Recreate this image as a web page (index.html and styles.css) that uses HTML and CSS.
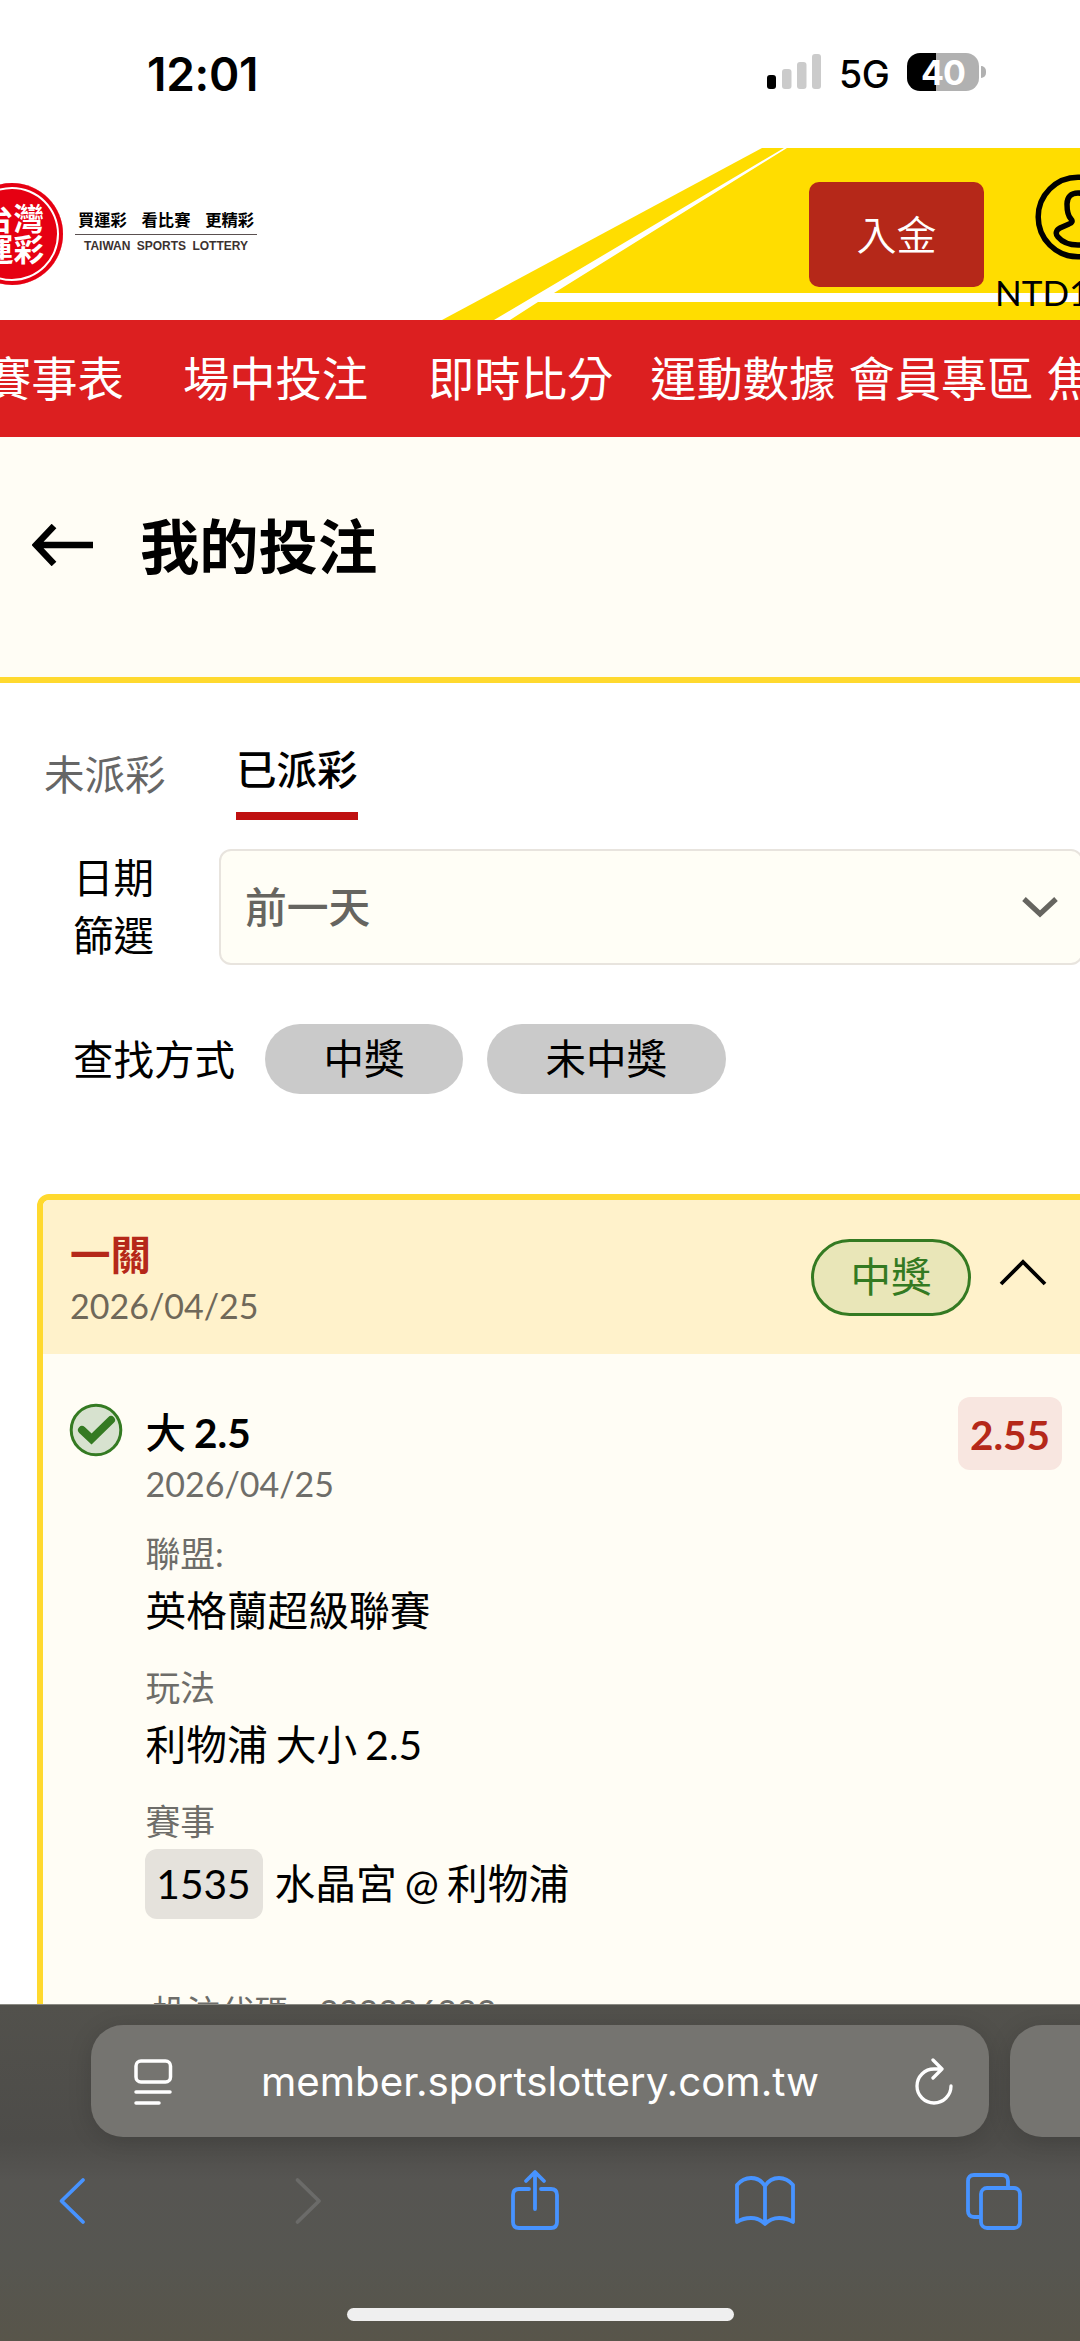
FILE: index.html
```html
<!DOCTYPE html>
<html lang="zh-Hant">
<head>
<meta charset="utf-8">
<title>我的投注</title>
<link rel="stylesheet" href="styles.css">
</head>
<body>
<div class="screen">
  <div class="status">
    <span class="time">12:01</span>
    <div class="status-right">
      <svg class="signal" viewBox="0 0 54 36"><rect x="0" y="21" width="9" height="14" rx="3"/><g fill="#cbcbcb"><rect x="15" y="15" width="9.500" height="20" rx="3"/><rect x="30" y="8" width="9.500" height="27" rx="3"/><rect x="45" y="0" width="9" height="35" rx="3"/></g></svg>
      <span class="net">5G</span>
      <span class="battery">40</span>
      <span class="nub"></span>
    </div>
  </div>

  <header class="site-header">
    <svg class="header-art" viewBox="0 0 1080 172" preserveAspectRatio="none"><path d="M762 0H1080V172H442Z" fill="#ffdd00"/><path d="M784 0h3L554 145H1080V154H538L510 172H494Z" fill="#fff"/></svg>
    <div class="logo"><div class="seal"><span>台灣</span><span>運彩</span></div>
      <div class="slogan"><div class="slogan-zh"><span>買運彩</span><span>看比賽</span><span>更精彩</span></div><div class="slogan-en">TAIWAN SPORTS LOTTERY</div></div>
    </div>
    <button class="deposit">入金</button>
    <div class="account">
      <svg class="user" viewBox="0 0 86 86" fill="none" stroke="#000" stroke-width="5.5"><circle cx="43" cy="43" r="39.800"/><path d="M43 19C36 19 32 23 32 30C32 38 33 42 36 45C38 47 37 49 34 50L25 54C21 56 20 60 23 63C28 69 36 71 43 71C50 71 58 69 63 63C66 60 65 56 61 54L52 50C49 49 48 47 50 45C53 42 54 38 54 30C54 23 50 19 43 19Z"/></svg>
      <span class="balance">NTD1</span>
    </div>
  </header>

  <nav class="nav"><a>賽事表</a><a>場中投注</a><a>即時比分</a><a>運動數據</a><a>會員專區</a><a>焦點</a></nav>

  <div class="title-band">
    <svg class="arrow" viewBox="0 0 62 42" fill="none" stroke="#000" stroke-width="6.500"><path d="M61 21H5M22 2L4 21L22 40"/></svg>
    <h1>我的投注</h1>
  </div>

  <main>
    <div class="tabs"><span class="tab">未派彩</span><span class="tab active">已派彩</span></div>
    <div class="filter-row">
      <div class="label">日期<br>篩選</div>
      <div class="select"><span>前一天</span><svg viewBox="0 0 36 22" width="36" height="22" fill="none" stroke="#666560" stroke-width="5.200"><path d="M2 3L18 18L34 3"/></svg></div>
    </div>
    <div class="search-row"><span>查找方式</span><span class="chip">中獎</span><span class="chip">未中獎</span></div>

    <section class="card">
      <div class="card-head">
        <div><div class="legs">一關</div><div class="date">2026/04/25</div></div>
        <div class="head-right"><span class="won">中獎</span><svg viewBox="0 0 48 28" width="48" height="28" fill="none" stroke="#000" stroke-width="3.800"><path d="M2 26L24 4L46 26"/></svg></div>
      </div>
      <div class="card-body">
        <svg class="check" viewBox="0 0 54 54"><circle cx="27" cy="27" r="24.800" fill="#d7e2cf" stroke="#347a22" stroke-width="3"/><path d="M13 27L22.500 36L42 17" fill="none" stroke="#347a22" stroke-width="8" stroke-linecap="round" stroke-linejoin="miter"/></svg>
        <div class="details">
          <div class="pick">大 <b>2.5</b></div>
          <div class="date pick-date">2026/04/25</div>
          <dl>
            <dt>聯盟:</dt><dd>英格蘭超級聯賽</dd>
            <dt>玩法</dt><dd>利物浦 大小 2.5</dd>
            <dt>賽事</dt><dd class="match"><span class="code">1535</span>水晶宮 @ 利物浦</dd>
          </dl>
          <div class="bet-code"><span>投注代碼:</span><span>222226222</span></div>
        </div>
        <div class="odds">2.55</div>
      </div>
    </section>
  </main>

  <footer class="browser">
    <div class="url-row">
      <div class="url">
        <svg viewBox="0 0 40 46" width="40" height="46" fill="none" stroke="#fff" stroke-width="3.500" stroke-linecap="round"><rect x="2" y="2" width="34.500" height="21" rx="5"/><path d="M2 33H36M2 44H25"/></svg>
        <span class="address">member.sportslottery.com.tw</span>
        <svg viewBox="0 0 40 48" width="40" height="48" fill="none" stroke="#fff" stroke-width="3.300" stroke-linecap="round" stroke-linejoin="round"><path d="M19 2L28 11L19 20M28 11H20A17 17 0 1 0 37 28"/></svg>
      </div>
      <div class="url next"></div>
    </div>
    <div class="tools">
      <svg viewBox="0 0 64 64"><path d="M42 11L20.500 32L42 53"/></svg>
      <svg class="off" viewBox="0 0 64 64"><path d="M25.500 11L47 32L25.500 53"/></svg>
      <svg viewBox="0 0 64 64"><path d="M27 20H17Q11 20 11 26V53Q11 59 17 59H49Q55 59 55 53V26Q55 20 49 20H39M33 40V4M24 12L33 3L42 12"/></svg>
      <svg viewBox="0 0 64 64"><path d="M32 17Q27 9 18 9Q10 9 4 16V53Q10 49 18 49Q26 49 32 55Q38 49 46 49Q54 49 60 53V16Q54 9 46 9Q37 9 32 17ZM32 17V54"/></svg>
      <svg viewBox="0 0 64 64"><path d="M16 48H11Q5 48 5 42V12Q5 6 11 6H39Q45 6 45 12V18"/><rect x="18" y="19" width="39" height="40" rx="6"/></svg>
    </div>
    <div class="home"></div>
  </footer>
</div>
</body>
</html>
```
FILE: styles.css
```css
* { box-sizing: border-box; }
body { margin: 0; background: #fff; color: #000; font-family: Lato, "Noto Sans CJK TC", sans-serif; }
.screen { width: 1080px; height: 2341px; overflow: hidden; display: flex; flex-direction: column; }
.screen > * { flex-shrink: 0; }

.status { height: 148px; padding: 53px 94px 0 147px; display: flex; justify-content: space-between; align-items: flex-start; font-family: Inter, sans-serif; }
.time { font-size: 46px; line-height: 42px; font-weight: 600; letter-spacing: -0.3px; }
.status-right { display: flex; align-items: center; height: 38px; }
.signal { width: 54px; height: 36px; margin-right: 18px; }
.net { font-size: 37.5px; font-weight: 500; line-height: 38px; width: 68px; padding-top: 5px; letter-spacing: -0.5px; }
.battery { width: 72px; height: 38px; border-radius: 13px; background: linear-gradient(90deg, #000 29px, #b1b1b1 29px); color: #fff; font-size: 34px; line-height: 39px; font-weight: 700; text-align: center; letter-spacing: -1px; }
.nub { width: 5px; height: 12px; margin-left: 2px; background: #b1b1b1; border-radius: 0 5px 5px 0; }

.site-header { height: 172px; position: relative; display: flex; overflow: hidden; }
.header-art { position: absolute; inset: 0; width: 1080px; height: 172px; }
.logo, .deposit, .account { position: relative; }
.logo { display: flex; width: 809px; padding-top: 35px; margin-left: -39px; flex-shrink: 0; margin-right: 39px; }
.seal { width: 102px; height: 102px; border-radius: 50%; background: #e60012; box-shadow: inset 0 0 0 4px #e60012, inset 0 0 0 6px #fff; color: #fff; font-weight: 700; font-size: 30.5px; line-height: 31px; display: flex; flex-direction: column; padding: 20px 0 0 22px; white-space: nowrap; flex-shrink: 0; }
.slogan { margin: 25px 0 0 12px; width: 182px; }
.slogan-zh { display: flex; justify-content: space-between; padding: 0 3px; height: 27px; border-bottom: 1.5px solid #5a5050; font-size: 16.3px; font-weight: 700; line-height: 24px; }
.slogan-en { font: 700 12px/17px "Liberation Sans", sans-serif; color: #3c3231; text-align: center; word-spacing: 3px; white-space: nowrap; padding-top: 3px; }
.deposit { margin: 34px 0 0; width: 175px; height: 105px; flex-shrink: 0; border: 0; border-radius: 10px; background: #b52819; color: #fff; font: 350 40px/104px Lato, "Noto Sans CJK TC", sans-serif; padding: 0; }
.account { width: 140px; flex-shrink: 0; padding: 26px 0 0 11px; display: flex; flex-direction: column; }
.user { width: 86px; height: 86px; margin-left: 40px; }
.balance { font-size: 35px; line-height: 42px; margin-top: 11px; }

.nav { height: 117px; background: #dc1f20; color: #fff; display: flex; font-size: 46.3px; line-height: 116px; white-space: nowrap; width: 1200px; margin-left: -15px; }
.nav a { margin-right: 37px; }
.nav a:nth-child(1) { margin-right: 59px; }
.nav a:nth-child(2) { margin-right: 60px; }
.nav a:nth-child(4), .nav a:nth-child(5) { margin-right: 13px; }

.title-band { height: 246px; background: #fffdf5; border-bottom: 6px solid #ffd92e; padding: 78px 0 0 32px; display: flex; }
.arrow { width: 62px; height: 42px; margin-top: 9px; }
h1 { margin: 0 0 0 46px; font-size: 59.3px; line-height: 62px; font-weight: 700; }

main { height: 1321px; overflow: hidden; font-size: 40.5px; word-spacing: -2.2px; }
.tabs { display: flex; padding: 62px 0 0 44px; height: 166px; }
.tab { line-height: 60px; width: 122px; color: #666; }
.tab.active { margin-left: 70px; height: 75px; line-height: 50px; border-bottom: 8px solid #bf1010; color: #000; font-weight: 500; }
.filter-row { display: flex; padding-left: 73px; }
.label { width: 146px; flex-shrink: 0; line-height: 58px; }
.select { width: 864px; height: 116px; flex-shrink: 0; border: 2.5px solid #e8e4de; border-radius: 12px; background: #fffef6; display: flex; align-items: center; justify-content: space-between; padding: 0 23px 0 24px; color: #666560; font-weight: 500; font-size: 41.8px; }
.select span { padding-bottom: 5px; }
.search-row { display: flex; align-items: center; height: 70px; margin: 59px 0 0 73px; line-height: 69px; }
.chip { background: #cacaca; border-radius: 35px; height: 70px; padding: 0 58.5px; margin-left: 24px; }
.search-row > span:nth-child(2) { margin-left: 30px; }

.card { margin: 100px 0 0 37px; width: 1070px; height: 900px; border: 6px solid #ffd92e; border-radius: 12px; background: #fffdf5; overflow: hidden; }
.card-head { height: 154px; background: #fff2cb; display: flex; justify-content: space-between; padding: 30px 54px 0 27px; }
.legs { color: #b52819; font-weight: 700; line-height: 50px; }
.date { font-size: 34px; line-height: 44px; color: #6f6859; margin-top: 4px; }
.head-right { display: flex; align-items: flex-start; padding-top: 9px; }
.won { width: 160px; height: 77px; border: 3px solid #347a22; border-radius: 39px; background: #e9e6b8; color: #347a22; text-align: center; line-height: 70px; margin-right: 28px; }
.head-right svg { margin-top: 19px; }
.card-body { display: flex; padding: 43px 0 0 26px; }
.check { width: 54px; height: 54px; margin-top: 6px; flex-shrink: 0; }
.details { width: 835px; flex-shrink: 0; padding: 10.5px 0 0 22.5px; }
.pick { line-height: 50px; font-weight: 500; }
.pick b { font-weight: 700; }
.pick-date { color: #6e6d69; margin-top: 4px; }
dl { margin: 21.5px 0 0; }
dt { font-size: 34.8px; line-height: 54px; color: #6e6d69; }
dd { margin: 0 0 20px; line-height: 60px; white-space: nowrap; font-size: 40.7px; }
.match { display: flex; line-height: 70px; }
.code { background: #e5e2dc; border-radius: 12px; width: 118px; height: 70px; text-align: center; margin: 0 12px 0 -1px; }
.bet-code { font-size: 34px; color: #6e6d69; display: flex; gap: 22px; margin: 71px 0 0 7px; line-height: 44px; }
.odds { flex-shrink: 0; width: 104px; height: 73px; border-radius: 12px; background: #f8e6e0; color: #b52819; font-weight: 700; text-align: center; line-height: 75px; }

.browser { height: 337px; background: linear-gradient(#52514c, #4d4c49 40%, #565552 52%, #565651 75%, #58554a); border-top: 1px solid #8b8a83; padding-top: 20px; }
.url-row { display: flex; gap: 21px; padding-left: 91px; }
.url { width: 898px; height: 112px; flex-shrink: 0; border-radius: 32px; background: #757470; box-shadow: 0 4px 24px rgba(0,0,0,.14); display: flex; align-items: center; padding: 2px 35px 0 43px; color: #fff; font: 400 40.3px/1 Inter, sans-serif; }
.address { flex: 1; text-align: center; margin-right: 8px; white-space: nowrap; }
.tools { display: flex; justify-content: space-between; padding: 32px 53px 0 41px; }
.tools svg { width: 64px; height: 64px; fill: none; stroke: #4793ff; stroke-width: 3.8; stroke-linecap: round; stroke-linejoin: round; }
.tools .off { stroke: #6b6b69; }
.home { width: 387px; height: 13px; border-radius: 7px; background: #efefef; margin: 75px auto 0; }
```
